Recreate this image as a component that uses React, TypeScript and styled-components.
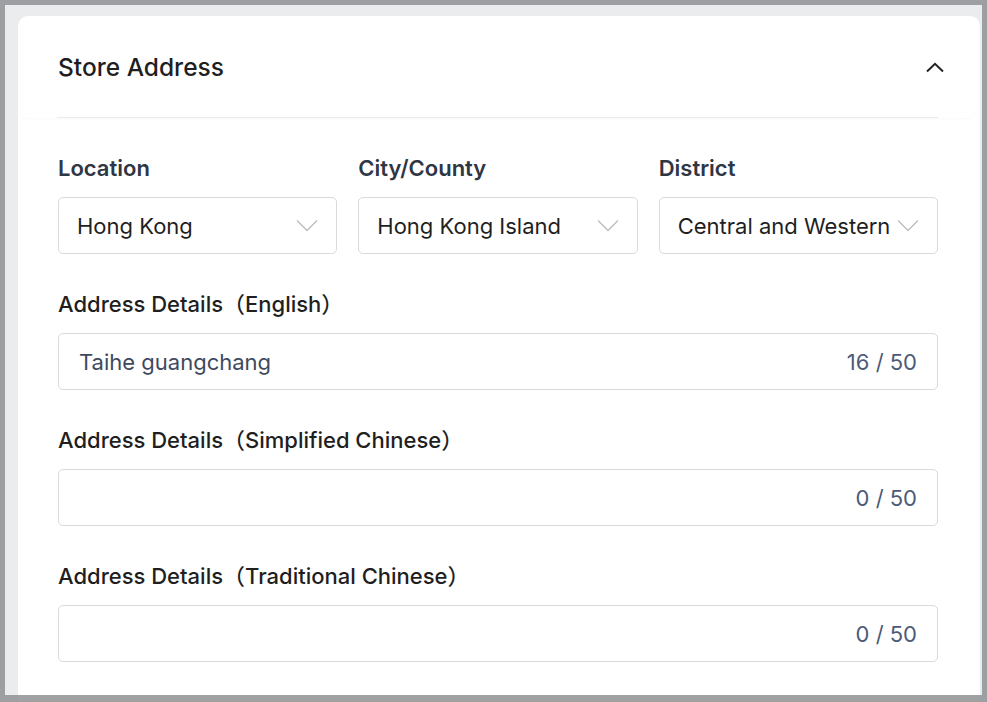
import React from 'react';
import styled, { createGlobalStyle } from 'styled-components';

const GlobalStyle = createGlobalStyle`
  html, body {
    margin: 0;
    padding: 0;
    background: #ebecee;
    font-family: Inter, "Noto Sans CJK SC", "Noto Sans", sans-serif;
    overflow: hidden;
  }
  * { box-sizing: border-box; }
`;

const Page = styled.div`
  height: 702px;
  padding: 16px 7px 0 18px;
  overflow: hidden;
`;

// window frame + scrim edge that sits over the page
const Frame = styled.div`
  position: fixed;
  inset: 0;
  border-style: solid;
  border-color: rgba(150, 151, 153, 0.9);
  border-width: 5px 5px 7px 5px;
  pointer-events: none;
`;

const Panel = styled.div`
  background: #ffffff;
  border-radius: 10px 10px 0 0;
  min-height: 800px;
`;

const Header = styled.div`
  height: 102px;
  margin-right: 3px;
  padding: 0 33px 0 40px;
  display: flex;
  align-items: center;
  justify-content: space-between;
  border-radius: 10px;
  box-shadow: 0 1px 2px rgba(0, 0, 0, 0.03);
  position: relative;

  &::after {
    content: '';
    position: absolute;
    left: 39px;
    right: 39px;
    bottom: 0;
    height: 1px;
    background: #ececec;
  }
`;

const Title = styled.h2`
  margin: 0;
  font-size: 24.5px;
  font-weight: 500;
  color: #1f1f1f;
`;

const Body = styled.div`
  padding: 36px 42px 0 40px;
`;

const SelectRow = styled.div`
  display: grid;
  grid-template-columns: repeat(3, 1fr);
  gap: 21px;
`;

const Field = styled.div`
  display: flex;
  flex-direction: column;
  margin-bottom: 36px;
`;

const Label = styled.div<{ $strong?: boolean }>`
  font-size: 22px;
  line-height: 28px;
  font-weight: ${({ $strong }) => ($strong ? 600 : 500)};
  color: ${({ $strong }) => ($strong ? '#2f3644' : '#1f1f1f')};
  margin-bottom: 15px;
  white-space: nowrap;
`;

const Select = styled.div`
  height: 57px;
  border: 1px solid #dadada;
  border-radius: 5px;
  display: flex;
  align-items: center;
  justify-content: space-between;
  padding: 0 18px;
  font-size: 22px;
  color: #1f1f1f;
  white-space: nowrap;
  overflow: hidden;
`;

const SelectText = styled.span`
  overflow: hidden;
`;

const Input = styled.div`
  height: 57px;
  border: 1px solid #dadada;
  border-radius: 5px;
  display: flex;
  align-items: center;
  justify-content: space-between;
  padding: 0 20px;
  font-size: 22px;
`;

const Value = styled.span`
  color: #3d4a5e;
`;

const Counter = styled.span`
  color: #4d5a78;
`;

const Chevron = () => (
  <svg width="22" height="13" viewBox="0 0 22 13" style={{ flexShrink: 0, marginLeft: 2 }}>
    <path d="M1 1.5 L11 11.5 L21 1.5" fill="none" stroke="#bdbdbd" strokeWidth="1.3" />
  </svg>
);

const ChevronUp = () => (
  <svg width="18" height="11" viewBox="0 0 18 11">
    <path d="M1 9.5 L9 1.8 L17 9.5" fill="none" stroke="#222" strokeWidth="2" />
  </svg>
);

const selects = [
  { label: 'Location', value: 'Hong Kong' },
  { label: 'City/County', value: 'Hong Kong Island' },
  { label: 'District', value: 'Central and Western' },
];

const addresses = [
  { label: 'Address Details（English）', value: 'Taihe guangchang' },
  { label: 'Address Details（Simplified Chinese）', value: '' },
  { label: 'Address Details（Traditional Chinese）', value: '' },
];

export default function App() {
  return (
    <>
      <GlobalStyle />
      <Page>
        <Panel>
          <Header>
            <Title>Store Address</Title>
            <ChevronUp />
          </Header>
          <Body>
            <SelectRow>
              {selects.map((s) => (
                <Field key={s.label}>
                  <Label $strong>{s.label}</Label>
                  <Select>
                    <SelectText>{s.value}</SelectText>
                    <Chevron />
                  </Select>
                </Field>
              ))}
            </SelectRow>
            {addresses.map((a) => (
              <Field key={a.label}>
                <Label>{a.label}</Label>
                <Input>
                  <Value>{a.value}</Value>
                  <Counter>{a.value.length} / 50</Counter>
                </Input>
              </Field>
            ))}
            <Field>
              <Label>Store Map</Label>
            </Field>
          </Body>
        </Panel>
      </Page>
      <Frame />
    </>
  );
}
